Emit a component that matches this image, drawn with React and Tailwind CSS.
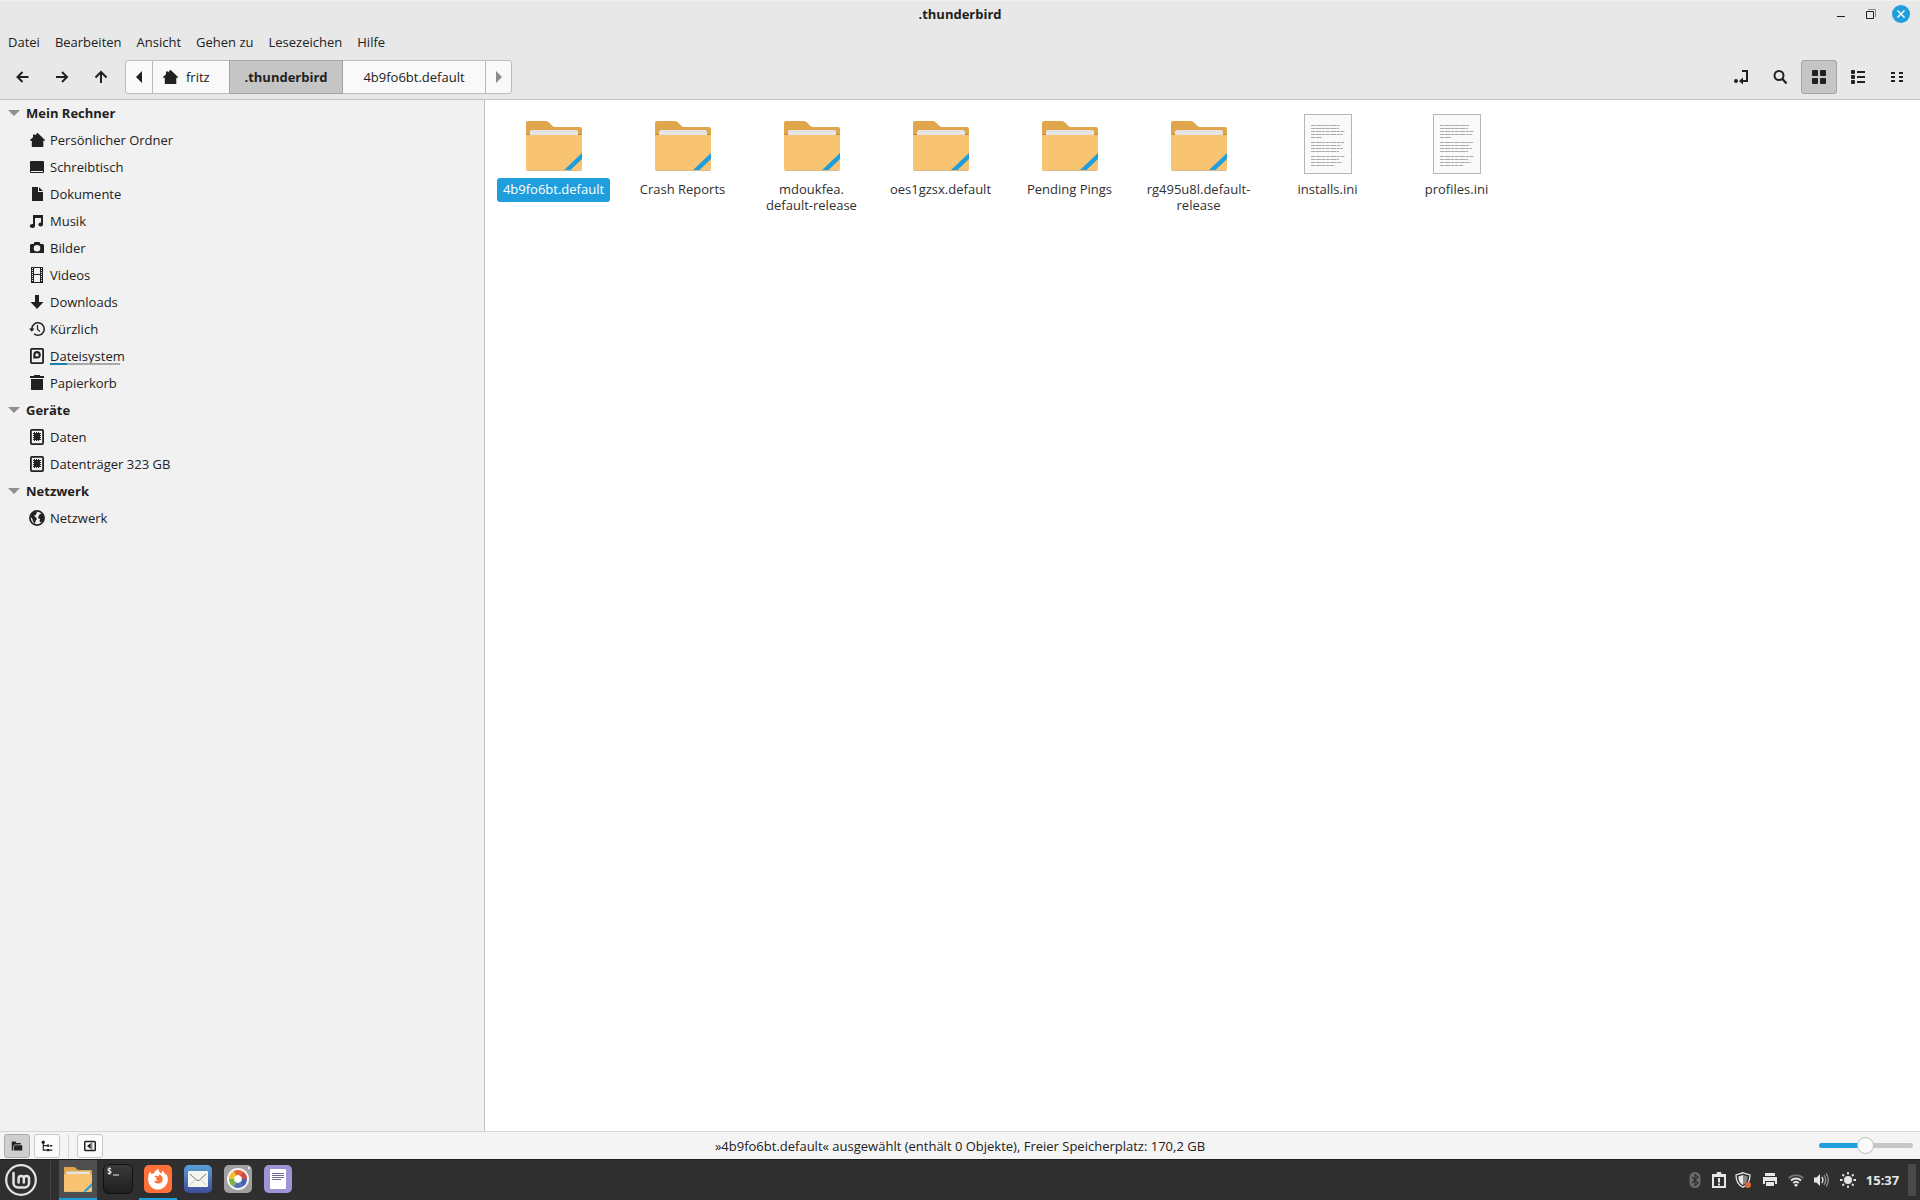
import React, { useState } from "react";

// 16px symbolic icons, all drawn in currentColor
function Icon({ children, className = "w-4 h-4" }) {
  return (
    <svg viewBox="0 0 16 16" fill="currentColor" aria-hidden="true" className={`${className} shrink-0`}>
      {children}
    </svg>
  );
}

const HomeIcon = () => (
  <Icon>
    <path d="M8.5.8 16 8v.8h-1.7V15H2.8V8.8H1V8l3-2.8V2.5h2v1z" />
  </Icon>
);

const icons = {
  home: <HomeIcon />,
  desktop: (
    <Icon>
      <path fillRule="evenodd" d="M2 2h12a1 1 0 0 1 1 1v10a1 1 0 0 1-1 1H2a1 1 0 0 1-1-1V3a1 1 0 0 1 1-1zM2 12v1h12v-1z" />
    </Icon>
  ),
  document: (
    <Icon>
      <path d="M3 1h6v5h5v9H3z" />
      <path d="M10 1.2 14 5h-4z" />
    </Icon>
  ),
  music: (
    <Icon>
      <path d="M4 2h10v9.5a2.3 2 0 1 1-2-1.900V5H6v8a2.600 2 0 1 1-2-2z" />
    </Icon>
  ),
  camera: (
    <Icon>
      <path fillRule="evenodd" d="M5.5 2h5l1 2H14l1 1v8H1V5l1-1h2.500zM8 5a3.300 3.300 0 1 0 0 6.600A3.300 3.300 0 0 0 8 5z" />
    </Icon>
  ),
  video: (
    <Icon>
      <path fillRule="evenodd" d="M2 0h12v16H2zM5 1v6h6V1zM5 8v7h6V8z" />
      <path stroke="#f1f1f1" strokeWidth="1" strokeDasharray="1 1" d="M3.500 1v14M12.500 1v14" />
    </Icon>
  ),
  download: (
    <Icon>
      <path d="M6 1h4v7h4.500L8 15 1.500 8H6z" />
    </Icon>
  ),
  recent: (
    <Icon>
      <path fill="none" stroke="currentColor" strokeWidth="1.500" d="M2.800 8a6.200 6.200 0 1 1 2.200 4.800" />
      <path d="M0 7.500h5.500L2.800 10.800z" />
      <path fill="none" stroke="currentColor" strokeWidth="1.200" d="M8.500 4v4.500l2.500 2" />
    </Icon>
  ),
  disk: (
    <Icon>
      <rect x="1.900" y=".9" width="12.200" height="14.200" rx="1" fill="none" stroke="currentColor" strokeWidth="1.800" />
      <path fillRule="evenodd" d="M8 3a3.700 3.700 0 1 1 0 7.600H4.300V7A3.800 4 0 0 1 8 3zM8 5.200a1.700 1.700 0 1 0 0 3.400 1.700 1.700 0 0 0 0-3.400z" />
    </Icon>
  ),
  trash: (
    <Icon>
      <path d="M5 0h6v1h4v2H1V1h4zM2 4h12v11H2z" />
    </Icon>
  ),
  chip: (
    <Icon>
      <rect x="1.900" y=".9" width="12.200" height="14.200" rx="1" fill="none" stroke="currentColor" strokeWidth="1.800" />
      <rect x="5" y="4" width="6" height="7" />
      <path stroke="currentColor" strokeDasharray="1 1" d="M4.500 4v7M11.500 4v7M5 3.500h6M5 11.500h6" />
    </Icon>
  ),
  globe: (
    <Icon>
      <circle cx="8" cy="8" r="7.100" fill="none" stroke="currentColor" strokeWidth="1.700" />
      <path d="M1.500 7 3 3l4-2 1 2-1.500 2L5 6l1.500 1L8 9l-1.500 2-.5 3-2-2.500L3.500 9zM10 5l3-2 2 4-.5 3-2.500 2.500-1.500-1 .5-2.500-2-1z" />
    </Icon>
  ),
};

const places = [
  {
    title: "Mein Rechner",
    items: [
      { label: "Persönlicher Ordner", icon: "home" },
      { label: "Schreibtisch", icon: "desktop" },
      { label: "Dokumente", icon: "document" },
      { label: "Musik", icon: "music" },
      { label: "Bilder", icon: "camera" },
      { label: "Videos", icon: "video" },
      { label: "Downloads", icon: "download" },
      { label: "Kürzlich", icon: "recent" },
      { label: "Dateisystem", icon: "disk", usage: 24 },
      { label: "Papierkorb", icon: "trash" },
    ],
  },
  {
    title: "Geräte",
    items: [
      { label: "Daten", icon: "chip" },
      { label: "Datenträger 323 GB", icon: "chip" },
    ],
  },
  {
    title: "Netzwerk",
    items: [{ label: "Netzwerk", icon: "globe" }],
  },
];

const files = [
  { lines: ["4b9fo6bt.default"], type: "folder" },
  { lines: ["Crash Reports"], type: "folder" },
  { lines: ["mdoukfea.", "default-release"], type: "folder" },
  { lines: ["oes1gzsx.default"], type: "folder" },
  { lines: ["Pending Pings"], type: "folder" },
  { lines: ["rg495u8l.default-", "release"], type: "folder" },
  { lines: ["installs.ini"], type: "text" },
  { lines: ["profiles.ini"], type: "text" },
];

const menus = ["Datei", "Bearbeiten", "Ansicht", "Gehen zu", "Lesezeichen", "Hilfe"];

function FolderArt({ className }) {
  return (
    <svg viewBox="4 9 56 50" aria-hidden="true" className={className}>
      <path fill="#dfa64c" d="M4 11a2 2 0 0 1 2-2h18q1.500 0 3 1.500l3 3Q31.500 15 33 15h25a2 2 0 0 1 2 2v10H4z" />
      <path fill="#b98636" d="M4 23l2-1h52l2 1v2H4z" />
      <path fill="#e4e4e4" d="M8 20a2 2 0 0 1 2-2h44a2 2 0 0 1 2 2v6H8z" />
      <path fill="#f8c471" d="M4 23h56v34a2 2 0 0 1-2 2H6a2 2 0 0 1-2-2z" />
      <path fill="#d9b98a" d="M4.500 58h55L58 59H6z" />
      <path fill="#1f9ede" d="M60 41v6L48.500 58H42z" />
    </svg>
  );
}

// [y, width] of every text line on the page
const pageLines = [
  [11, 29], [14, 28], [17, 34], [20, 32], [23, 11],
  [28, 33], [31, 30], [34, 32], [37, 28],
  [42, 34], [45, 28], [48, 31], [51, 23],
];

function TextFileArt() {
  return (
    <svg viewBox="0 0 48 60" aria-hidden="true" className="w-12 h-[60px]">
      <rect x=".5" y=".5" width="47" height="59" fill="#fafafa" stroke="#b5b5b5" />
      {pageLines.map(([y, w]) => (
        <path key={y} stroke="#aaa" strokeDasharray="4 .6 6 .5 3 .6" d={`M7 ${y + 0.5}h${w}`} />
      ))}
    </svg>
  );
}

function TitleBar() {
  return (
    <header className="relative flex h-7 items-center justify-center border-t border-[#f0f0f0] pb-[2px]">
      <h1 className="text-[13px] font-bold">.thunderbird</h1>
      <div className="absolute right-[10px] flex items-center gap-3">
        <button aria-label="Minimieren" className="flex h-[18px] w-[18px] items-center justify-center">
          <Icon><path d="M4 10h8v1H4z" /></Icon>
        </button>
        <button aria-label="Wiederherstellen" className="flex h-[18px] w-[18px] items-center justify-center">
          <Icon>
            <path fill="none" stroke="currentColor" d="M3.500 5.500h7v7h-7z" />
            <path fill="none" stroke="#8a8a8a" d="M5 3.500h7.500V11" />
          </Icon>
        </button>
        <button aria-label="Schließen" className="flex h-[18px] w-[18px] items-center justify-center rounded-full bg-[#1f9ede] text-white">
          <Icon><path stroke="currentColor" strokeWidth="1.500" d="m4.500 4.500 7 7m0-7-7 7" /></Icon>
        </button>
      </div>
    </header>
  );
}

function ToolButton({ label, active, onClick, children }) {
  return (
    <button
      aria-label={label}
      onClick={onClick}
      className={`flex h-[34px] w-9 items-center justify-center rounded-[3px] border ${
        active ? "border-[#a3a3a3] bg-[#c5c5c5]" : "border-transparent"
      }`}
    >
      {children}
    </button>
  );
}

function Toolbar() {
  const [view, setView] = useState("icons");

  return (
    <div className="flex items-center border-b border-[#c4c4c4] px-[5px] pt-1 pb-[5px]">
      <div className="flex gap-[3px]">
        <ToolButton label="Zurück">
          <Icon><path fill="none" stroke="currentColor" strokeWidth="2" d="M13.500 8H3.500M7.500 3l-5 5 5 5" /></Icon>
        </ToolButton>
        <ToolButton label="Vor">
          <Icon><path fill="none" stroke="currentColor" strokeWidth="2" d="M2 8h10M8 3l5 5-5 5" /></Icon>
        </ToolButton>
        <ToolButton label="Übergeordneter Ordner">
          <Icon><path fill="none" stroke="currentColor" strokeWidth="2" d="M8 14V4M2.500 8.500 8 3l5.500 5.500" /></Icon>
        </ToolButton>
      </div>

      <nav className="ml-[6px] flex h-[34px] rounded-[3px] border border-[#bcbcbc] bg-[#f9f9f9]">
        <button aria-label="Nach links" className="flex w-[27px] items-center justify-center border-r border-[#bcbcbc]">
          <Icon><path d="M11 2v12L5 8z" /></Icon>
        </button>
        <button className="flex min-w-[76px] items-center gap-2 pl-[9px]">
          <HomeIcon />
          fritz
        </button>
        <button className="-my-px min-w-[114px] border border-[#a3a3a3] bg-[#c5c5c5] font-bold">.thunderbird</button>
        <button className="min-w-[143px] border-r border-[#bcbcbc]">4b9fo6bt.default</button>
        <button aria-label="Nach rechts" className="flex w-[25px] items-center justify-center text-[#8a8a8a]">
          <Icon><path d="M5 2v12l6-6z" /></Icon>
        </button>
      </nav>

      <div className="ml-auto flex gap-[3px]">
        <ToolButton label="Ort eingeben">
          <Icon>
            <circle cx="3" cy="12" r="2" />
            <path fill="none" stroke="currentColor" strokeWidth="2" d="M9 2h5v10H9" />
            <path d="M10 8.500v7L6 12z" />
          </Icon>
        </ToolButton>
        <ToolButton label="Suchen">
          <Icon>
            <circle cx="7" cy="6.500" r="4.500" fill="none" stroke="currentColor" strokeWidth="2" />
            <path stroke="currentColor" strokeWidth="2.200" d="m10 9.500 4.500 5" />
          </Icon>
        </ToolButton>
        <ToolButton label="Symbolansicht" active={view === "icons"} onClick={() => setView("icons")}>
          <Icon>
            <rect x="1" y="1" width="6" height="6" rx="1" />
            <rect x="9" y="1" width="6" height="6" rx="1" />
            <rect x="1" y="9" width="6" height="6" rx="1" />
            <rect x="9" y="9" width="6" height="6" rx="1" />
          </Icon>
        </ToolButton>
        <ToolButton label="Listenansicht" active={view === "list"} onClick={() => setView("list")}>
          <Icon>
            <rect x="1" y="1" width="4" height="4" rx="1" />
            <rect x="1" y="6" width="4" height="4" rx="1" />
            <rect x="1" y="11" width="4" height="4" rx="1" />
            <path d="M7 2h8v2H7zM7 7h8v2H7zM7 12h8v2H7z" />
          </Icon>
        </ToolButton>
        <ToolButton label="Kompaktansicht" active={view === "compact"} onClick={() => setView("compact")}>
          <Icon>
            <path d="M2 3h4v2H2zM10 3h4v2h-4zM2 7h4v2H2zM10 7h4v2h-4zM2 11h4v2H2zM10 11h4v2h-4z" />
          </Icon>
        </ToolButton>
      </div>
    </div>
  );
}

function Sidebar() {
  return (
    <aside className="w-[485px] shrink-0 border-r border-[#c4c4c4] bg-[#f1f1f1]">
      {places.map((group) => (
        <section key={group.title}>
          <h2 className="flex h-[27px] items-center gap-[6px] pb-px pl-2 font-bold">
            <svg viewBox="0 0 12 6" aria-hidden="true" className="h-[6px] w-3">
              <path fill="#8f8f8f" d="M0 0h12L6 6z" />
            </svg>
            {group.title}
          </h2>
          <ul>
            {group.items.map((item) => (
              <li key={item.label}>
                <a href="#" className="flex h-[27px] items-center gap-[5px] pb-px pl-[29px]">
                  {icons[item.icon]}
                  <span className="relative">
                    {item.label}
                    {item.usage && (
                      <span className="absolute bottom-0 left-0 h-[2px] w-[70px] bg-[#a9a9a9]">
                        <span className="block h-full bg-[#1a7fb3]" style={{ width: `${item.usage}%` }} />
                      </span>
                    )}
                  </span>
                </a>
              </li>
            ))}
          </ul>
        </section>
      ))}
    </aside>
  );
}

function FileGrid() {
  const [selected, setSelected] = useState(0);

  return (
    <main className="flex flex-1 flex-wrap content-start bg-white pt-3 pl-1">
      {files.map((file, i) => (
        <button
          key={file.lines.join("")}
          onClick={() => setSelected(i)}
          className="flex w-[129px] flex-col items-center self-start"
        >
          <span className="flex h-16 items-center justify-center">
            {file.type === "folder" ? <FolderArt className="mt-1 h-[50px] w-14" /> : <TextFileArt />}
          </span>
          <span
            className={`mt-[2px] rounded-[3px] px-[6px] pt-[3px] pb-[5px] leading-4 ${
              i === selected ? "bg-[#1f9ede] text-white" : "text-[#303030]"
            }`}
          >
            {file.lines.map((line) => (
              <span key={line} className="block">{line}</span>
            ))}
          </span>
        </button>
      ))}
    </main>
  );
}

function StatusBar() {
  const [zoom, setZoom] = useState(49);
  const button = "flex h-6 w-[26px] items-center justify-center rounded-[3px] border";

  return (
    <footer className="grid h-7 grid-cols-[1fr_auto_1fr] items-center border-t border-[#d6d6d6] bg-[#f4f4f4]">
      <div className="flex items-center pl-1">
        <button aria-label="Orte" className={`${button} border-[#ababab] bg-[#cfcfcf]`}>
          <Icon className="w-3 h-3"><path d="M1 2h5l1 2h6v2H5L3 8v6H1zM5 7h10v7H4V8z" /></Icon>
        </button>
        <button aria-label="Baumansicht" className={`${button} ml-1 border-[#c8c8c8] bg-[#fbfbfb]`}>
          <Icon className="w-3 h-3">
            <path fill="none" stroke="currentColor" strokeWidth="1.500" d="M3 2v11.500h6M3 7.500h6M9 13.500h6" />
            <circle cx="3" cy="3" r="2.200" />
            <path d="M8 6h3v3H8zM12 6.500h3v2h-3zM8 12h3v3H8z" />
          </Icon>
        </button>
        <span className="mx-2 h-6 w-px bg-[#d6d6d6]" />
        <button aria-label="Seitenleiste verbergen" className={`${button} border-[#c8c8c8] bg-[#fbfbfb]`}>
          <Icon className="w-3 h-3">
            <rect x="1" y="2" width="14" height="12" rx="1" fill="none" stroke="currentColor" strokeWidth="2" />
            <path d="M9 4v8L4 8zM10 3h1v10h-1z" />
          </Icon>
        </button>
      </div>
      <p>»4b9fo6bt.default« ausgewählt (enthält 0 Objekte), Freier Speicherplatz: 170,2 GB</p>
      <div className="flex justify-end pr-[7px]">
        <input
          type="range"
          aria-label="Symbolgröße"
          value={zoom}
          onChange={(e) => setZoom(Number(e.target.value))}
          className="h-[5px] w-[94px] appearance-none rounded-full [&::-webkit-slider-thumb]:h-[17px] [&::-webkit-slider-thumb]:w-[17px] [&::-webkit-slider-thumb]:appearance-none [&::-webkit-slider-thumb]:rounded-full [&::-webkit-slider-thumb]:border [&::-webkit-slider-thumb]:border-[#bcbcbc] [&::-webkit-slider-thumb]:bg-[#fbfbfb]"
          style={{ background: `linear-gradient(to right, #1f9ede ${zoom}%, #c6c6c6 ${zoom}%)` }}
        />
      </div>
    </footer>
  );
}

function LauncherButton({ label, running, active, children }) {
  return (
    <button
      aria-label={label}
      className={`flex h-10 w-[38px] items-center justify-center border-b-2 ${
        running ? "border-[#1f9ede]" : "border-transparent"
      } ${active ? "bg-[#4f4f4f]" : ""}`}
    >
      {children}
    </button>
  );
}

function AppArt({ children }) {
  return <svg viewBox="0 0 28 28" aria-hidden="true" className="h-7 w-7">{children}</svg>;
}

// colour wheel blades, clockwise from the top, one per 60 degrees
const blades = ["#e5673a", "#cf4a45", "#4560ae", "#5570b8", "#7bb443", "#f0c02f"];

function Taskbar() {
  return (
    <div className="flex h-[41px] items-center border-t border-[#1f1f1f] bg-[#2f2f2f] text-[#e6e6e6]">
      <button aria-label="Menü" className="ml-[5px]">
        <svg viewBox="0 0 32 32" fill="none" stroke="#e3e3e3" aria-hidden="true" className="h-8 w-8">
          <circle cx="16" cy="16" r="14.800" strokeWidth="2.200" />
          <path strokeWidth="2.500" strokeLinecap="round" d="M8.500 9v10a4.500 4.500 0 0 0 4.500 4.500h6.500a4.500 4.500 0 0 0 4.500-4.500v-4.500a2.600 2.600 0 0 0-5.200 0v4M18.800 14.500a2.600 2.600 0 0 0-5.200 0v4" />
        </svg>
      </button>
      <span className="mr-2 ml-[13px] h-[38px] w-px bg-[#454545]" />

      <div className="flex gap-[2px]">
        <LauncherButton label="Dateien" running active>
          <FolderArt className="h-[25px] w-7" />
        </LauncherButton>
        <LauncherButton label="Terminal">
          <svg viewBox="0 0 30 30" aria-hidden="true" className="h-[30px] w-[30px]">
            <defs>
              <linearGradient id="term" x2="0" y2="1">
                <stop stopColor="#3a3a3a" />
                <stop offset="1" stopColor="#1e1e1e" />
              </linearGradient>
            </defs>
            <rect x=".5" y=".5" width="29" height="29" rx="5" fill="url(#term)" stroke="#111" />
            <text x="4" y="10" fill="#eee" fontSize="8" fontWeight="bold" fontFamily="DejaVu Sans Mono, monospace">$</text>
            <path fill="#eee" d="M10 10.500h6v1h-6z" />
          </svg>
        </LauncherButton>
        <LauncherButton label="Firefox" running>
          <AppArt>
            <rect width="28" height="28" rx="5" fill="#ff7139" />
            <path fill="#fff" d="M6 6.500 7.500 9l2.500-.7c.8-2 2-3.500 4.500-4.600-.5 2.300 1.500 3.500 2.800 5l.9-3c1.800 1.200 2.800 2.600 3.300 4.300l.8-1C24 12 24.500 15 23 18.500A9.800 9.800 0 0 1 4.200 16c-.5-3.500.3-7 1.800-9.500z" />
            <path fill="#ff7139" d="M10 11.500c1 0 1.800-.8 3-1l1.500 1c.6-.5.500-1.500 0-2 3 .3 4.500 2.500 4.200 5a4.500 4.500 0 0 1-4.700 4c-2 0-3.500-1.200-4-3 1.500 1 3 .5 4-.5-1.500.2-2.500-.8-2.500-1.600l2-.4z" />
          </AppArt>
        </LauncherButton>
        <LauncherButton label="Thunderbird">
          <AppArt>
            <defs>
              <linearGradient id="mail" x2="0" y2="1">
                <stop stopColor="#5aa0d6" />
                <stop offset="1" stopColor="#3f4d9c" />
              </linearGradient>
            </defs>
            <rect width="28" height="28" rx="5" fill="url(#mail)" />
            <rect x="4" y="6" width="20" height="16" rx="1" fill="#f5f5f0" />
            <path fill="none" stroke="#777" d="m6 9 6.500 6q1.500 1.200 3 0L22 9" />
            <path fill="none" stroke="#c8c8c8" d="m6 20 5-5M22 20l-5-5" />
          </AppArt>
        </LauncherButton>
        <LauncherButton label="Bilder">
          <AppArt>
            <rect width="28" height="28" rx="5" fill="#a0a0a0" />
            <circle cx="25" cy="3" r="1.200" fill="#eee" />
            <circle cx="14" cy="14" r="11" fill="#f4f4f4" />
            {blades.map((color, i) => (
              <path key={color} fill={color} transform={`rotate(${i * 60} 14 14)`} d="M14 14 9.500 6.200A9 9 0 0 1 18.500 6.200z" />
            ))}
            <path fill="#fff" d="M14 9.800 17.700 11.900v4.200L14 18.200l-3.700-2.100v-4.200z" />
          </AppArt>
        </LauncherButton>
        <LauncherButton label="Notizen">
          <AppArt>
            <rect width="28" height="28" rx="5" fill="#9c95d6" />
            <rect x="6" y="4" width="16" height="20" rx="1" fill="#fff" />
            <path stroke="#6d6a94" d="M8 8.500h12M8 10.500h12M8 12.500h12M8 14.500h9" />
          </AppArt>
        </LauncherButton>
      </div>

      <div className="ml-auto flex items-center">
        <div className="flex">
          <span className="flex w-6 justify-center">
            <Icon>
              <rect x="2.500" width="11" height="16" rx="5.500" fill="#6b6b6b" />
              <path fill="none" stroke="#2f2f2f" strokeWidth="1.200" d="m5 5 6 6-3 2.500v-11L11 5l-6 6" />
            </Icon>
          </span>
          <span className="flex w-6 justify-center">
            <Icon>
              <path fillRule="evenodd" d="M1 2h4.500a2.500 2.500 0 0 1 5 0H15v14H1zM3 5v9h10V5zM7 6h2v4.500H7zM7 11.500h2v2H7z" />
            </Icon>
          </span>
          <span className="flex w-6 justify-center">
            <Icon>
              <path fill="none" stroke="currentColor" strokeWidth="1.300" d="M8 .8 15 3c0 6-2 10-7 12.200C3 13 1 9 1 3z" />
              <path d="M8 3v10C5 11.500 3.500 9 3.300 4.500z" />
              <path fill="#8a8a8a" d="M8 3l4.700 1.500C12.500 9 11 11.500 8 13z" />
              <circle cx="13" cy="13" r="3" fill="#dd6b34" />
            </Icon>
          </span>
        </div>
        <div className="ml-[2px] flex">
          <span className="flex w-[26px] justify-center">
            <Icon><path d="M3 1h10v3H3zM1 5h14v7h-2V9H3v3H1zM4 10h8v4H4z" /></Icon>
          </span>
          <span className="flex w-[26px] justify-center">
            <Icon>
              <path fill="none" stroke="#777" strokeWidth="1.800" d="M.8 6a10.500 10.500 0 0 1 14.400 0" />
              <path fill="none" stroke="currentColor" strokeWidth="1.800" d="M3 8.500a7.200 7.200 0 0 1 10 0M5.200 11a4.200 4.200 0 0 1 5.600 0" />
              <path d="M8 11.500 10 13l-2 2-2-2z" />
            </Icon>
          </span>
          <span className="flex w-[26px] justify-center">
            <Icon>
              <path d="M0 5.500h2.500L6 2v12l-3.500-3.500H0z" />
              <path fill="none" stroke="currentColor" strokeWidth="1.400" d="M7.800 5q2.200 3 0 6" />
              <path fill="none" stroke="#8a8a8a" strokeWidth="1.400" d="M10 3.200q3.400 4.800 0 9.600M12.200 1.500q4.200 6.500 0 13" />
            </Icon>
          </span>
          <span className="flex w-[26px] justify-center">
            <Icon>
              <circle cx="8" cy="8" r="4" />
              <path stroke="currentColor" strokeWidth="1.800" d="M8 0v2.500M8 13.500V16M0 8h2.500M13.500 8H16M2.400 2.400 4 4M12 12l1.600 1.600M2.400 13.600 4 12M12 4l1.600-1.600" />
            </Icon>
          </span>
        </div>
        <time className="w-[43px] text-center font-bold">15:37</time>
        <button aria-label="Schreibtisch anzeigen" className="mx-1 h-8 w-2 bg-[#4a4a4a]" />
      </div>
    </div>
  );
}

export default function App() {
  return (
    <div className="flex h-screen flex-col bg-[#e8e8e8] font-['Open_Sans',sans-serif] text-[13px] leading-[18px] text-[#212121]">
      <TitleBar />
      <nav className="flex h-7 items-center gap-[15px] pl-2">
        {menus.map((menu) => (
          <button key={menu}>{menu}</button>
        ))}
      </nav>
      <Toolbar />
      <div className="flex min-h-0 flex-1">
        <Sidebar />
        <FileGrid />
      </div>
      <StatusBar />
      <Taskbar />
    </div>
  );
}
